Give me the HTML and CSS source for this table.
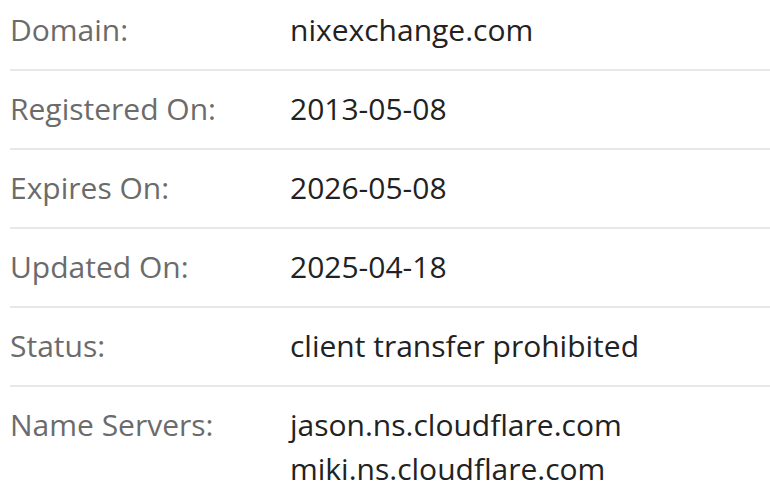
FILE: index.html
```html
<!DOCTYPE html>
<html>
<head>
<meta charset="utf-8">
<link rel="stylesheet" href="styles.css">
</head>
<body>
<div class="whois">
  <div class="row"><div class="label">Domain:</div><div class="value">nixexchange.com</div></div>
  <div class="row"><div class="label">Registered On:</div><div class="value">2013-05-08</div></div>
  <div class="row"><div class="label">Expires On:</div><div class="value">2026-05-08</div></div>
  <div class="row"><div class="label">Updated On:</div><div class="value">2025-04-18</div></div>
  <div class="row"><div class="label">Status:</div><div class="value">client transfer prohibited</div></div>
  <div class="row"><div class="label">Name Servers:</div><div class="value">jason.ns.cloudflare.com<br>miki.ns.cloudflare.com</div></div>
</div>
</body>
</html>
```
FILE: styles.css
```css
html, body {
  margin: 0;
  padding: 0;
  background: #ffffff;
}
body {
  font-family: "Open Sans", sans-serif;
  font-size: 30px;
  line-height: 44px;
}
.whois {
  margin-top: -8px;
  padding-left: 10px;
}
.row {
  display: flex;
  padding: 16px 0 17px;
  border-bottom: 2px solid #e8e8e8;
}
.row:last-child {
  border-bottom: none;
}
.label {
  width: 280px;
  flex: none;
  color: #6b6b6b;
}
.value {
  color: #222222;
}
```
